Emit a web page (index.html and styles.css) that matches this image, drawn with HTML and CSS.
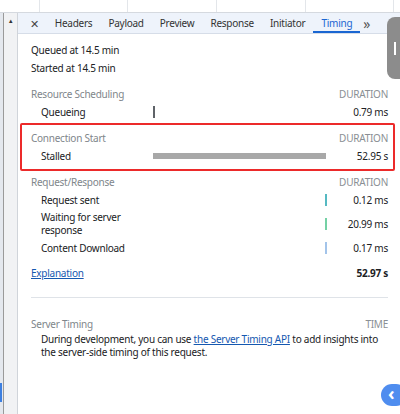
FILE: index.html
```html
<!DOCTYPE html>
<html lang="en">
<head>
    <meta charset="UTF-8" />
    <title>Timing</title>
    <link rel="stylesheet" href="styles.css">
</head>
<body>
<div class="grid-head">
    <div class="cell" style="width: 40px"></div>
    <div class="cell" style="width: 88px"></div>
    <div class="cell" style="width: 89px"></div>
    <div class="cell" style="width: 89px"></div>
    <div class="cell" style="width: 88px"></div>
</div>
<div class="main">
    <div class="gutter">
        <div class="edge"></div>
        <div class="side">
            <span class="up">&#9650;</span>
        </div>
    </div>
    <div class="panel">
        <div class="tabs">
            <span class="tab close">&#10005;</span>
            <span class="tab">Headers</span>
            <span class="tab">Payload</span>
            <span class="tab">Preview</span>
            <span class="tab">Response</span>
            <span class="tab">Initiator</span>
            <span class="tab active">Timing</span>
            <span class="tab more">&raquo;</span>
        </div>
        <div class="content">
            <div class="line">Queued at 14.5 min</div>
            <div class="line">Started at 14.5 min</div>

            <div class="section">
                <div class="sec-head"><span>Resource Scheduling</span><span class="caps">DURATION</span></div>
                <div class="row">
                    <span class="label">Queueing</span>
                    <span class="bar-cell"><span class="tick" style="margin-left: 0; background: #5f6368"></span></span>
                    <span class="value">0.79 ms</span>
                </div>
            </div>

            <div class="section marked">
                <div class="sec-head"><span>Connection Start</span><span class="caps">DURATION</span></div>
                <div class="row">
                    <span class="label">Stalled</span>
                    <span class="bar-cell"><span class="bar" style="width: 173px"></span></span>
                    <span class="value">52.95 s</span>
                </div>
            </div>

            <div class="section">
                <div class="sec-head"><span>Request/Response</span><span class="caps">DURATION</span></div>
                <div class="row">
                    <span class="label">Request sent</span>
                    <span class="bar-cell"><span class="tick" style="margin-left: 172px; background: #56b9c2"></span></span>
                    <span class="value">0.12 ms</span>
                </div>
                <div class="row tall">
                    <span class="label">Waiting for server response</span>
                    <span class="bar-cell"><span class="tick" style="margin-left: 172px; background: #74d1a5"></span></span>
                    <span class="value">20.99 ms</span>
                </div>
                <div class="row">
                    <span class="label">Content Download</span>
                    <span class="bar-cell"><span class="tick" style="margin-left: 172px; background: #a3c4ea"></span></span>
                    <span class="value">0.17 ms</span>
                </div>
            </div>

            <div class="total">
                <a href="#">Explanation</a>
                <b>52.97 s</b>
            </div>

            <div class="divider"></div>

            <div class="sec-head"><span>Server Timing</span><span class="caps">TIME</span></div>
            <p class="note">During development, you can use <a href="#">the Server Timing API</a> to add insights into the server-side timing of this request.</p>
        </div>
    </div>
</div>
<div class="scroll-thumb"><span></span></div>
<div class="side-btn">&#8249;</div>
<div class="edge-mark"></div>
</body>
</html>
```

FILE: styles.css
```css
html, body {
    margin: 0;
    width: 400px;
    height: 414px;
    overflow: hidden;
}
body {
    font-family: "Noto Sans", "Open Sans", sans-serif;
    font-size: 10px;
    letter-spacing: -0.25px;
    color: #202124;
    background: #fff;
    position: relative;
}
.grid-head {
    display: flex;
    height: 12px;
    border-bottom: 1px solid #d5d9df;
    background: #fff;
}
.grid-head .cell {
    border-right: 1px solid #e3e6ea;
    box-sizing: border-box;
}
.main {
    display: flex;
    height: 401px;
}
.gutter {
    display: flex;
    width: 18px;
    flex-shrink: 0;
}
.edge {
    width: 3px;
    background: #e4e8ee;
    border-right: 1px solid #9a9a9a;
}
.side {
    flex: 1;
    background: #f1f2f4;
    border-right: 1px solid #d0d4da;
    text-align: center;
}
.up {
    display: block;
    font-size: 6px;
    color: #333;
    margin-top: 4px;
}
.panel {
    flex: 1;
    min-width: 0;
}
.tabs {
    display: flex;
    height: 20px;
    align-items: stretch;
    background: #eef3fb;
    border-bottom: 1px solid #d6dde8;
    white-space: nowrap;
}
.tab {
    display: flex;
    align-items: center;
    padding: 0 8px;
    color: #333;
    box-sizing: border-box;
}
.tab.close {
    padding: 0 8px 0 12px;
    font-size: 11px;
    color: #444;
}
.tab.active {
    color: #1a66d2;
    border-bottom: 2px solid #1a66d2;
    padding-top: 2px;
}
.tab.more {
    padding: 0 3px;
    font-size: 14px;
    color: #555;
}
.content {
    padding: 7px 12px 0 13px;
}
.line {
    height: 18px;
    line-height: 18px;
}
.section {
    margin-top: 8px;
}
.section.marked {
    border: 2px solid #ec2a2a;
    border-radius: 2px;
    margin: 2px -7px -6px -11px;
    padding: 4px 5px 4px 9px;
}
.section.marked + .section {
    margin-top: 8px;
}
.sec-head {
    display: flex;
    justify-content: space-between;
    height: 18px;
    line-height: 18px;
    color: #80868b;
}
.caps {
    color: #8a8f94;
}
.row {
    display: grid;
    grid-template-columns: 112px 173px 1fr;
    align-items: center;
    height: 18px;
    padding-left: 10px;
}
.row.tall {
    height: 30px;
}
.row.tall .label {
    line-height: 13px;
    padding-right: 14px;
}
.bar-cell {
    display: flex;
    align-items: center;
    height: 100%;
}
.tick {
    flex-shrink: 0;
    width: 2px;
    height: 12px;
}
.bar {
    height: 6px;
    background: #a8a8a8;
}
.value {
    text-align: right;
}
.total {
    display: flex;
    justify-content: space-between;
    align-items: center;
    height: 18px;
    margin-top: 7px;
}
.total b {
    font-weight: bold;
}
a {
    color: #1558b0;
    text-decoration: underline;
}
.divider {
    height: 1px;
    background: #dfe3e8;
    margin: 15px 0 17px;
}
.note {
    margin: 0;
    padding-left: 10px;
    line-height: 12.5px;
}
.scroll-thumb {
    position: absolute;
    left: 387px;
    top: 17px;
    width: 20px;
    height: 62px;
    border-radius: 8px;
    background: #8c8c8c;
}
.scroll-thumb span {
    position: absolute;
    left: 7px;
    top: 25px;
    width: 2px;
    height: 13px;
    background: #fff;
}
.side-btn {
    position: absolute;
    left: 381px;
    top: 384px;
    width: 26px;
    height: 22px;
    border-radius: 11px;
    background: #4f8def;
    color: #fff;
    font-size: 18px;
    line-height: 19px;
    padding-left: 7px;
    box-sizing: border-box;
    font-weight: bold;
}
.edge-mark {
    position: absolute;
    left: 0;
    top: 383px;
    width: 2px;
    height: 19px;
    background: #3d7fe0;
}
```
